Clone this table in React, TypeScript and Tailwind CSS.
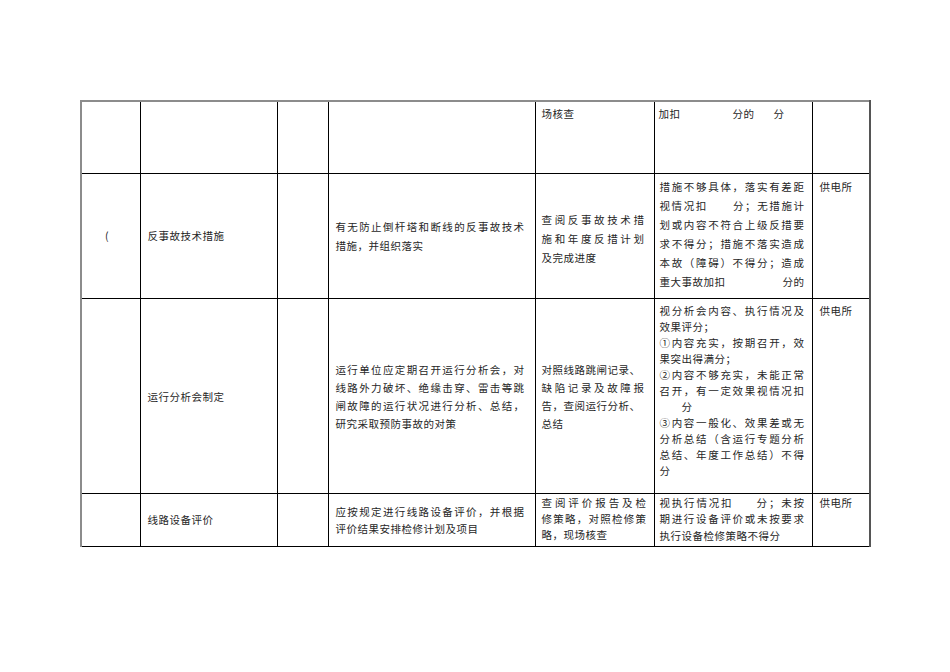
import React from "react";

type Line = { t: React.ReactNode; j?: boolean; cls?: string };

const Gap = ({ w }: { w: string }) => <span className={`inline-block ${w}`} />;

const Lines = ({ lines, lh }: { lines: Line[]; lh: string }) => (
  <div className={lh}>
    {lines.map((l, i) => (
      <div
        key={i}
        className={`whitespace-nowrap ${l.j ? "text-justify [text-align-last:justify]" : ""} ${l.cls ?? ""}`}
      >
        {l.t}
      </div>
    ))}
  </div>
);

const td = "border border-black p-0 align-top";
const first = "border-l-2 border-l-[#8c8c8c]";
const last = "border-r-2 border-r-[#555]";
const top = "border-t-2 border-t-[#8c8c8c]";

const App: React.FC = () => {
  return (
    <div className="min-h-[672px] w-[950px] bg-white pl-[80px] pt-[100px] font-['Noto_Sans_CJK_SC','Noto_Sans_CJK_JP',sans-serif] text-[10.5px] tracking-[0.5px] text-[#262626]">
      <table className="table-fixed border-collapse">
        <colgroup>
          <col className="w-[59px]" />
          <col className="w-[137px]" />
          <col className="w-[51px]" />
          <col className="w-[207px]" />
          <col className="w-[119px]" />
          <col className="w-[158px]" />
          <col className="w-[58px]" />
        </colgroup>
        <tbody>
          {/* 上一页延续的行 */}
          <tr className="h-[72px]">
            <td className={`${td} ${first} ${top}`} />
            <td className={`${td} ${top}`} />
            <td className={`${td} ${top}`} />
            <td className={`${td} ${top}`} />
            <td className={`${td} ${top} pl-[6px] pt-[2px]`}>
              <Lines lh="leading-[19px]" lines={[{ t: "场核查" }]} />
            </td>
            <td className={`${td} ${top} pl-[4px] pt-[2px]`}>
              <Lines
                lh="leading-[19px]"
                lines={[
                  {
                    t: (
                      <>
                        加扣
                        <Gap w="w-[52px]" />
                        分的
                        <Gap w="w-[19px]" />分
                      </>
                    ),
                  },
                ]}
              />
            </td>
            <td className={`${td} ${top} ${last}`} />
          </tr>

          {/* 反事故技术措施 */}
          <tr className="h-[125px]">
            <td className={`${td} ${first} !align-middle pl-[23px]`}>(</td>
            <td className={`${td} !align-middle pl-[7px]`}>反事故技术措施</td>
            <td className={td} />
            <td className={`${td} !align-middle pl-[7px] pr-[10px]`}>
              <Lines
                lh="leading-[19px]"
                lines={[
                  { t: "有无防止倒杆塔和断线的反事故技术", j: true },
                  { t: "措施，并组织落实" },
                ]}
              />
            </td>
            <td className={`${td} !align-middle pl-[6px] pr-[9px] pt-[6px]`}>
              <Lines
                lh="leading-[19px]"
                lines={[
                  { t: "查阅反事故技术措", j: true },
                  { t: "施和年度反措计划", j: true },
                  { t: "及完成进度" },
                ]}
              />
            </td>
            <td className={`${td} pl-[5px] pr-[7px] pt-[3px]`}>
              <Lines
                lh="leading-[19px]"
                lines={[
                  { t: "措施不够具体，落实有差距", j: true },
                  {
                    t: (
                      <>
                        视情况扣
                        <Gap w="w-[24px]" />
                        分；无措施计
                      </>
                    ),
                    j: true,
                  },
                  { t: "划或内容不符合上级反措要", j: true },
                  { t: "求不得分；措施不落实造成", j: true },
                  { t: "本故（障碍）不得分；造成", j: true },
                  {
                    t: (
                      <>
                        <span>重大事故加扣</span>
                        <span>分的</span>
                      </>
                    ),
                    cls: "flex justify-between",
                  },
                ]}
              />
            </td>
            <td className={`${td} ${last} pl-[7px] pt-[3px]`}>
              <Lines lh="leading-[19px]" lines={[{ t: "供电所" }]} />
            </td>
          </tr>

          {/* 运行分析会制定 */}
          <tr className="h-[195px]">
            <td className={`${td} ${first}`} />
            <td className={`${td} !align-middle pl-[7px] pt-[2px]`}>运行分析会制定</td>
            <td className={td} />
            <td className={`${td} !align-middle pl-[7px] pr-[10px] pt-[2px]`}>
              <Lines
                lh="leading-[18px]"
                lines={[
                  { t: "运行单位应定期召开运行分析会，对", j: true },
                  { t: "线路外力破坏、绝缘击穿、雷击等跳", j: true },
                  { t: "闸故障的运行状况进行分析、总结，", j: true },
                  { t: "研究采取预防事故的对策" },
                ]}
              />
            </td>
            <td className={`${td} !align-middle pl-[6px] pr-[9px] pt-[2px]`}>
              <Lines
                lh="leading-[18px]"
                lines={[
                  { t: "对照线路跳闸记录、" },
                  { t: "缺陷记录及故障报", j: true },
                  { t: "告，查阅运行分析、" },
                  { t: "总结" },
                ]}
              />
            </td>
            <td className={`${td} pl-[5px] pr-[7px] pt-[4px]`}>
              <Lines
                lh="leading-[16px]"
                lines={[
                  { t: "视分析会内容、执行情况及", j: true },
                  { t: "效果评分；" },
                  { t: "①内容充实，按期召开，效", j: true },
                  { t: "果突出得满分；" },
                  { t: "②内容不够充实，未能正常", j: true },
                  { t: "召开，有一定效果视情况扣", j: true },
                  { t: "分", cls: "pl-[22px]" },
                  { t: "③内容一般化、效果差或无", j: true },
                  { t: "分析总结（含运行专题分析", j: true },
                  { t: "总结、年度工作总结）不得", j: true },
                  { t: "分" },
                ]}
              />
            </td>
            <td className={`${td} ${last} pl-[7px] pt-[4px]`}>
              <Lines lh="leading-[16px]" lines={[{ t: "供电所" }]} />
            </td>
          </tr>

          {/* 线路设备评价 */}
          <tr className="h-[53px]">
            <td className={`${td} ${first}`} />
            <td className={`${td} !align-middle pl-[7px]`}>线路设备评价</td>
            <td className={td} />
            <td className={`${td} !align-middle pl-[7px] pr-[10px]`}>
              <Lines
                lh="leading-[17px]"
                lines={[
                  { t: "应按规定进行线路设备评价，并根据", j: true },
                  { t: "评价结果安排检修计划及项目" },
                ]}
              />
            </td>
            <td className={`${td} pl-[6px] pr-[7px] pt-[1px]`}>
              <Lines
                lh="leading-[16px]"
                lines={[
                  { t: "查阅评价报告及检", j: true },
                  { t: "修策略，对照检修策", j: true },
                  { t: "略，现场核查" },
                ]}
              />
            </td>
            <td className={`${td} pl-[5px] pr-[7px] pt-[1px]`}>
              <Lines
                lh="leading-[16.5px]"
                lines={[
                  {
                    t: (
                      <>
                        视执行情况扣
                        <Gap w="w-[22px]" />
                        分；未按
                      </>
                    ),
                    j: true,
                  },
                  { t: "期进行设备评价或未按要求", j: true },
                  { t: "执行设备检修策略不得分" },
                ]}
              />
            </td>
            <td className={`${td} ${last} pl-[7px] pt-[1px]`}>
              <Lines lh="leading-[16px]" lines={[{ t: "供电所" }]} />
            </td>
          </tr>
        </tbody>
      </table>
    </div>
  );
};

export default App;
